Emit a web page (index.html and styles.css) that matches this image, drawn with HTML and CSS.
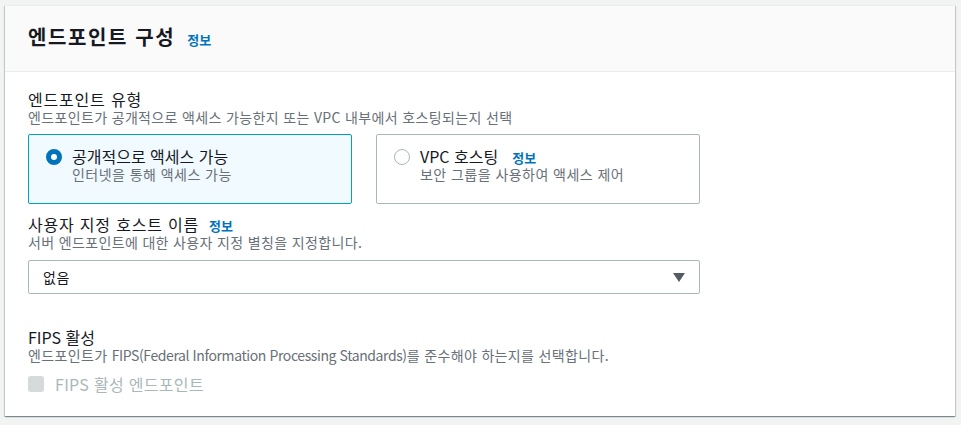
FILE: index.html
```html
<!DOCTYPE html>
<html lang="ko">
<head>
<meta charset="utf-8">
<title>엔드포인트 구성</title>
<link rel="stylesheet" href="styles.css">
</head>
<body>
<div class="page">
  <section class="container">
    <header class="container-header">
      <h2 class="title">엔드포인트 구성</h2><a class="info info-header">정보</a>
    </header>
    <div class="container-body">
      <div class="field">
        <div class="label">엔드포인트 유형</div>
        <div class="desc">엔드포인트가 공개적으로 액세스 가능한지 또는 VPC 내부에서 호스팅되는지 선택</div>
        <div class="tiles">
          <div class="tile tile-selected">
            <span class="radio radio-checked"></span>
            <div class="tile-text">
              <div class="tile-title">공개적으로 액세스 가능</div>
              <div class="tile-desc">인터넷을 통해 액세스 가능</div>
            </div>
          </div>
          <div class="tile">
            <span class="radio"></span>
            <div class="tile-text">
              <div class="tile-title">VPC 호스팅<a class="info info-tile">정보</a></div>
              <div class="tile-desc">보안 그룹을 사용하여 액세스 제어</div>
            </div>
          </div>
        </div>
      </div>

      <div class="field field-host">
        <div class="label">사용자 지정 호스트 이름<a class="info info-label">정보</a></div>
        <div class="desc">서버 엔드포인트에 대한 사용자 지정 별칭을 지정합니다.</div>
        <div class="select">
          <span class="select-value">없음</span>
          <svg class="select-arrow" width="12" height="9" viewBox="0 0 12 9"><polygon points="0,0 12,0 6,9" fill="#545b64"/></svg>
        </div>
      </div>

      <div class="field field-fips">
        <div class="label">FIPS 활성</div>
        <div class="desc">엔드포인트가 <span class="latin">FIPS(Federal Information Processing Standards)</span>를 준수해야 하는지를 선택합니다.</div>
        <label class="checkbox-row">
          <span class="checkbox"></span>
          <span class="checkbox-label">FIPS 활성 엔드포인트</span>
        </label>
      </div>
    </div>
  </section>
</div>
</body>
</html>
```

FILE: styles.css
```css
* { box-sizing: border-box; }

html, body {
  margin: 0;
  padding: 0;
  background: #f2f3f3;
}

body {
  font-family: "Noto Sans CJK KR", "Noto Sans", sans-serif;
  color: #16191f;
}

.page {
  padding: 5px 6px 9px 5px;
}

.container {
  background: #ffffff;
  border-top: 1px solid #eaeded;
  box-shadow: 0 1px 1px 0 rgba(0, 28, 36, 0.3), 1px 1px 1px 0 rgba(0, 28, 36, 0.15), -1px 1px 1px 0 rgba(0, 28, 36, 0.15);
}

.container-header {
  background: #fafafa;
  border-bottom: 1px solid #eaeded;
  padding: 19px 23px 22px;
  height: 66px;
  display: flex;
  align-items: baseline;
}

.title {
  margin: 0;
  font-size: 20px;
  font-weight: 700;
  line-height: 24px;
  letter-spacing: 1.6px;
}

.info {
  color: #0073bb;
  font-weight: 700;
  font-size: 13px;
  line-height: 16px;
  letter-spacing: 0;
  text-decoration: none;
}

.info-header {
  margin-left: 12px;
}

.info-label {
  margin-left: 10px;
}

.info-tile {
  margin-left: 14px;
}

.container-body {
  padding: 17px 23px 22px;
}

.label {
  font-size: 16px;
  line-height: 20px;
  color: #16191f;
  letter-spacing: 0.8px;
}

.field-fips .label {
  letter-spacing: 0;
}

.desc {
  font-size: 14px;
  line-height: 17px;
  color: #687078;
  letter-spacing: 0.35px;
}

.latin {
  letter-spacing: -0.4px;
}

.tiles {
  width: 672px;
  margin-top: 8px;
  display: grid;
  grid-template-columns: 1fr 1fr;
  gap: 24px;
}

.tile {
  display: flex;
  align-items: flex-start;
  height: 70px;
  border: 1px solid #aab7b8;
  border-radius: 2px;
  padding: 11px 16px 0 17px;
  background: #ffffff;
}

.tile-selected {
  border-color: #00a1c9;
  background: #f1faff;
}

.radio {
  flex: none;
  width: 16px;
  height: 16px;
  border-radius: 50%;
  border: 1px solid #aab7b8;
  background: #ffffff;
  margin-top: 3px;
  margin-right: 10px;
}

.radio-checked {
  border: 5px solid #0073bb;
}

.tile-title {
  font-size: 16px;
  line-height: 20px;
  color: #16191f;
}

.tile-desc {
  font-size: 14px;
  line-height: 17px;
  color: #687078;
  letter-spacing: 0.45px;
}

.field-host {
  margin-top: 10px;
}

.select {
  width: 672px;
  height: 34px;
  margin-top: 9px;
  border: 1px solid #aab7b8;
  border-radius: 2px;
  display: flex;
  align-items: center;
  justify-content: space-between;
  padding: 0 14px;
  background: #ffffff;
}

.select-value {
  font-size: 14px;
  line-height: 20px;
  color: #16191f;
  letter-spacing: 0.5px;
}

.select-arrow {
  display: block;
  margin-top: 1px;
}

.field-fips {
  margin-top: 33px;
}

.checkbox-row {
  display: flex;
  align-items: center;
  margin-top: 10px;
  height: 20px;
}

.checkbox {
  flex: none;
  width: 16px;
  height: 16px;
  border-radius: 3px;
  background: #d5dbdb;
  margin-right: 11px;
}

.checkbox-label {
  font-size: 16px;
  line-height: 20px;
  color: #aab7b8;
  letter-spacing: 0.3px;
}
```
